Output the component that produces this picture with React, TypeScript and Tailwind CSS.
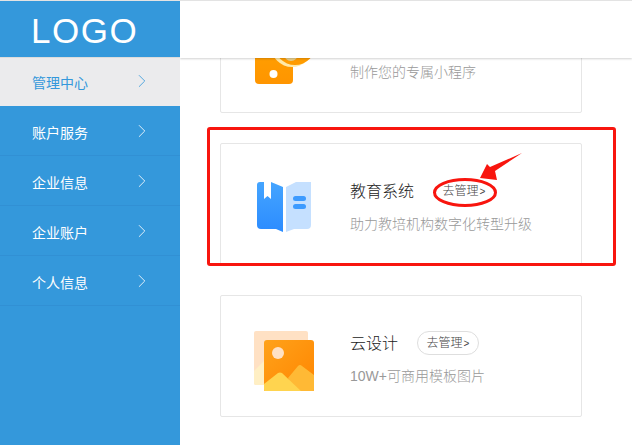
import React from 'react';
import { ChevronRight } from 'lucide-react';

const menu = ['管理中心', '账户服务', '企业信息', '企业账户', '个人信息'];

const MiniIcon = () => (
  <svg width="60" height="60" viewBox="0 0 60 60" className="overflow-visible">
    <defs>
      <linearGradient id="mini" x1="0" y1="0" x2="0" y2="1">
        <stop offset="0" stopColor="#ffa800" />
        <stop offset="1" stopColor="#ff9500" />
      </linearGradient>
    </defs>
    <rect x="1" y="-10" width="38" height="67" rx="4" fill="url(#mini)" />
    <circle cx="38" cy="19" r="21" fill="#ffe9a8" />
    <circle cx="41" cy="17" r="21" fill="#ff9c00" />
    <circle cx="37" cy="27" r="7" fill="#e6cf8e" />
    <circle cx="37" cy="24" r="7" fill="#ff9c00" />
    <circle cx="19.5" cy="47" r="4" fill="#fff" />
  </svg>
);

const BookIcon = () => (
  <svg width="60" height="60" viewBox="0 0 60 60">
    <defs>
      <linearGradient id="book" x1="0" y1="0" x2="0" y2="1">
        <stop offset="0" stopColor="#45a5ff" />
        <stop offset="1" stopColor="#2c8cff" />
      </linearGradient>
    </defs>
    <path d="M3 6 Q3 3 6 3 H17 L29 8 V53 L22 50 H7 Q3 50 3 46 Z" fill="url(#book)" />
    <path d="M10 3 H17 V20 L13.5 17 L10 20 Z" fill="#fff" />
    <path d="M32 53 V8 L42 3 H57 V46 Q57 50 53 50 H40 Z" fill="#c5e0ff" />
    <rect x="39" y="17" width="13" height="5" rx="2.5" fill="#3d9bff" />
    <rect x="39" y="25" width="13" height="5" rx="2.5" fill="#3d9bff" />
  </svg>
);

const PictureIcon = () => (
  <svg width="60" height="60" viewBox="0 0 60 60">
    <defs>
      <linearGradient id="pic" x1="0" y1="0" x2="1" y2="1">
        <stop offset="0" stopColor="#ffa21a" />
        <stop offset="1" stopColor="#ff8500" />
      </linearGradient>
    </defs>
    <rect x="0" y="0" width="54" height="54" rx="2" fill="#ffe1c4" />
    <path d="M0 40 L10 30 L28 54 H2 Q0 54 0 52 Z" fill="#ffefc4" />
    <rect x="10" y="9" width="50" height="52" rx="3" fill="url(#pic)" />
    <circle cx="24" cy="22" r="6" fill="#ffe1c4" />
    <path d="M34 47 L44 35 Q46 33 48 35 L60 44 V58 Q60 61 57 61 H40 Z" fill="#ffb935" />
    <path d="M10 53 L24 42 Q26 41 28 42 L48 61 H13 Q10 61 10 58 Z" fill="#ffd44f" />
  </svg>
);

const Card = ({ icon, title, desc, manage, noBorder }: { icon: React.ReactNode; title?: string; desc: string; manage?: boolean; noBorder?: boolean }) => (
  <div className="flex h-[122px] w-[362px] shrink-0 rounded-[2px] border border-[#e6e6e6] bg-white pl-[33px] pt-[35px]">
    <div className="h-[60px] w-[60px] shrink-0">{icon}</div>
    <div className="ml-[36px]">
      <div className="flex h-[24px] items-center">
        {title && <span className="pt-[2px] text-[16px] font-light leading-[24px] text-[#222]">{title}</span>}
        {manage && (
          <span className={`flex h-[24px] w-[62px] items-center justify-center rounded-full text-[12px] font-light text-[#444] ${noBorder ? 'ml-[19px]' : 'ml-[19px] border border-[#dedede]'}`}>
            去管理<span className="ml-[1px] text-[10px]">&gt;</span>
          </span>
        )}
      </div>
      <div className="mt-[9px] text-[14px] font-light leading-[24px] text-[#999]">{desc}</div>
    </div>
  </div>
);

export default function App() {
  return (
    <div
      className="relative flex h-[445px] w-[632px] overflow-hidden border-t border-[#e3e3e3] bg-white"
      style={{ fontFamily: '"Liberation Sans", "Noto Sans CJK SC", sans-serif' }}
    >
      {/* Sidebar */}
      <aside className="z-20 w-[180px] shrink-0 bg-[#3498db]">
        <div className="h-[56px] pl-[31px] pt-[2px] text-[35px] leading-[56px] tracking-[1.5px] text-white">LOGO</div>
        <div className="h-px bg-[#dcdcdc]" />
        <ul>
          {menu.map((item, i) => (
            <li
              key={item}
              className={`flex items-center justify-between pl-[32px] pr-[27px] text-[14px] ${
                i === 0 ? 'h-[48px] bg-[#ebebed] text-[#3498db]' : 'h-[50px] border-b border-[#3190d4] text-white'
              }`}
            >
              <span className={i === 0 ? 'pt-[3px]' : 'pt-[6px]'}>{item}</span>
              <ChevronRight size={22} strokeWidth={0.9} className={i === 0 ? '-mt-[2px]' : ''} />
            </li>
          ))}
        </ul>
      </aside>

      {/* Main */}
      <main className="flex min-w-0 flex-1 flex-col">
        <div className="z-10 h-[57px] shrink-0 bg-white shadow-[0_1px_2px_rgba(0,0,0,0.18)]" />
        <div className="-mt-[67px] flex flex-col gap-[30px] pl-[40px]">
          <Card icon={<MiniIcon />} desc="制作您的专属小程序" />
          <Card icon={<BookIcon />} title="教育系统" desc="助力教培机构数字化转型升级" manage noBorder />
          <Card icon={<PictureIcon />} title="云设计" desc="10W+可商用模板图片" manage />
        </div>
      </main>

      {/* Red annotation drawn over the screenshot */}
      <div className="absolute left-[207px] top-[126px] z-30 h-[139px] w-[409px] rounded-[3px] border-[3px] border-[#f8150e]" />
      <svg className="absolute left-0 top-[-1px] z-30" width="632" height="445" viewBox="0 0 632 445" fill="none">
        <ellipse cx="465" cy="192.5" rx="30.5" ry="13" stroke="#f8150e" strokeWidth="3" />
        <path d="M522 153 L495 171 L497 180 L480 178 L487 164 L490 167 Z" fill="#f8150e" />
      </svg>
    </div>
  );
}
